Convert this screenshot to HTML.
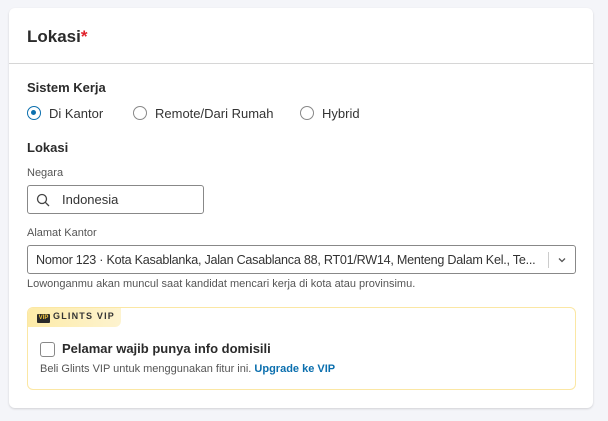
<!DOCTYPE html>
<html><head><style>
body{margin:0;width:608px;height:421px;background:#f4f5f9;font-family:"Liberation Sans",sans-serif;color:#333;position:relative;overflow:hidden}
.card{position:absolute;left:9px;top:8px;width:584px;height:400px;background:#fff;border-radius:6px;box-shadow:0 1px 2px rgba(0,0,0,.15)}
.a{position:absolute;white-space:nowrap}
.hd{left:18px;top:19px;font-size:17px;font-weight:bold;color:#2b2b2b}
.div{position:absolute;left:0;right:0;top:55px;border-top:1px solid #d6d6d6}
.lb{font-size:13px;font-weight:bold;color:#2b2b2b}
.t13{font-size:13px;color:#333}
.t11{font-size:11px;color:#555}
.rad{position:absolute;width:14px;height:14px;border:1px solid #888;border-radius:50%;box-sizing:border-box}
.in{position:absolute;border:1px solid #888;border-radius:3px;box-sizing:border-box}
</style></head><body>
<div class="card">
<div class="a hd">Lokasi<span style="color:#e0202a">*</span></div>
<div class="div"></div>
<div class="a lb" style="left:18px;top:72px">Sistem Kerja</div>
<div class="rad" style="left:18px;top:98px;border:1.5px solid #0b6fae"><div style="position:absolute;left:3px;top:3px;width:5px;height:5px;border-radius:50%;background:#0b6fae"></div></div>
<div class="a t13" style="left:40px;top:98px">Di Kantor</div>
<div class="rad" style="left:124px;top:98px"></div>
<div class="a t13" style="left:146px;top:98px">Remote/Dari Rumah</div>
<div class="rad" style="left:291px;top:98px"></div>
<div class="a t13" style="left:313px;top:98px">Hybrid</div>
<div class="a lb" style="left:18px;top:132px">Lokasi</div>
<div class="a t11" style="left:18px;top:159px">Negara</div>
<div class="in" style="left:18px;top:177px;width:177px;height:29px">
<svg style="position:absolute;left:8px;top:7px" width="14" height="14" viewBox="0 0 14 14" fill="none" stroke="#444" stroke-width="1.3"><circle cx="6" cy="6" r="4.5"/><path d="M9.3 9.3L13 13"/></svg>
<div class="a t13" style="left:34px;top:6px">Indonesia</div></div>
<div class="a t11" style="left:18px;top:219px">Alamat Kantor</div>
<div class="in" style="left:18px;top:237px;width:549px;height:29px">
<div class="a" style="left:8px;top:7px;font-size:12.6px;color:#333;letter-spacing:-0.25px">Nomor 123 · Kota Kasablanka, Jalan Casablanca 88, RT01/RW14, Menteng Dalam Kel., Te...</div>
<div style="position:absolute;left:520px;top:6px;height:16px;border-left:1px solid #ccc"></div>
<svg style="position:absolute;left:529px;top:10px" width="10" height="8" viewBox="0 0 10 8" fill="none" stroke="#555" stroke-width="1.3"><path d="M2 2.5L5 5.5L8 2.5"/></svg></div>
<div class="a t11" style="left:18px;top:270px">Lowonganmu akan muncul saat kandidat mencari kerja di kota atau provinsimu.</div>
<div style="position:absolute;left:18px;top:299px;width:549px;height:83px;border:1px solid #fbe7a4;border-radius:6px;box-sizing:border-box;overflow:hidden">
<div style="position:absolute;left:0;top:0;width:93px;height:19px;background:linear-gradient(90deg,#fdeba8,#fdf3cf);border-bottom-right-radius:6px">
<div style="position:absolute;left:9px;top:6px;width:13px;height:9px;background:#2a2a2a;border-radius:1px;color:#f3c63c;font-size:6px;font-weight:bold;line-height:9px;text-align:center">VIP</div>
<div class="a" style="left:25px;top:3px;font-size:9px;font-weight:bold;letter-spacing:1.2px;color:#333">GLINTS VIP</div></div>
<div style="position:absolute;left:12px;top:34px;width:15px;height:15px;border:1px solid #888;border-radius:3px;box-sizing:border-box"></div>
<div class="a" style="left:34px;top:33px;font-size:13px;font-weight:bold;color:#2b2b2b">Pelamar wajib punya info domisili</div>
<div class="a t11" style="left:12px;top:55px">Beli Glints VIP untuk menggunakan fitur ini. <b style="color:#0b6fae">Upgrade ke VIP</b></div>
</div>
</div>
</body></html>
